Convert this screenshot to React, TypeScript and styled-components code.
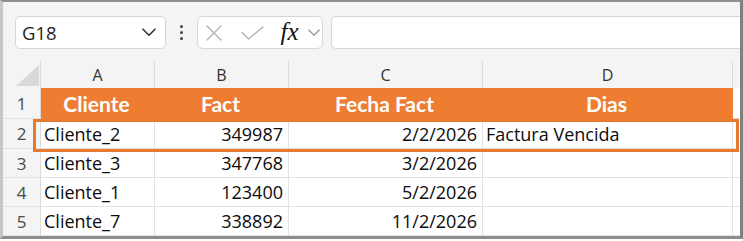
import React from 'react';
import styled, { createGlobalStyle } from 'styled-components';

const GlobalStyle = createGlobalStyle`
  html, body {
    margin: 0;
    padding: 0;
    background: #ffffff;
  }
  * {
    box-sizing: border-box;
  }
`;

const ORANGE = '#ee7d32';
const GRID = '#e2e2e2';
const PANEL = '#f4f4f4';

const Frame = styled.div`
  width: 743px;
  height: 239px;
  border-top: 2px solid #8e8e8e;
  border-left: 3px solid #c6c6c6;
  border-right: 3px solid #7f7f7f;
  border-bottom: 3px solid #8e8e8e;
  background: ${PANEL};
  overflow: hidden;
  font-family: 'Open Sans', 'Noto Sans', sans-serif;
`;

const Toolbar = styled.div`
  height: 59px;
  display: flex;
  align-items: flex-start;
  padding: 14px 0 0 12px;
`;

const NameBox = styled.div`
  width: 151px;
  height: 33px;
  display: flex;
  align-items: center;
  justify-content: space-between;
  padding: 0 9px 0 6px;
  background: #ffffff;
  border: 1px solid #d6d6d6;
  border-radius: 5px;
  font-size: 18.5px;
  color: #1f1f1f;
`;

const Dots = styled.div`
  width: 31px;
  height: 33px;
  display: flex;
  flex-direction: column;
  align-items: center;
  justify-content: center;
  gap: 3px;
`;

const Dot = styled.span`
  width: 3px;
  height: 3px;
  border-radius: 50%;
  background: #444;
`;

const FormulaButtons = styled.div`
  width: 126px;
  height: 33px;
  display: flex;
  align-items: center;
  padding-left: 8px;
  background: #ffffff;
  border: 1px solid #d6d6d6;
  border-radius: 6px;
`;

const IconSlot = styled.span<{ $w: number; $gap: number }>`
  width: ${(p) => p.$w}px;
  margin-right: ${(p) => p.$gap}px;
  display: flex;
  align-items: center;
  justify-content: center;
`;

const Fx = styled.span`
  font-family: 'Liberation Serif', 'DejaVu Serif', serif;
  font-style: italic;
  font-size: 25px;
  color: #111;
  line-height: 1;
  margin-top: -3px;
  margin-left: 2px;
`;

const FormulaInput = styled.div`
  flex: 1;
  height: 33px;
  margin-left: 8px;
  background: #ffffff;
  border: 1px solid #d6d6d6;
  border-right: none;
  border-radius: 5px 0 0 5px;
`;

const SheetArea = styled.div`
  position: relative;
`;

const Sheet = styled.div`
  display: grid;
  grid-template-columns: 38px 114px 134px 194px 250px 7px;
  grid-template-rows: 27px 31px 30px 29px 29px 29px;
`;

const Corner = styled.div`
  background: ${PANEL};
  border-right: 1px solid #dadada;
  display: flex;
  align-items: flex-end;
  justify-content: flex-end;
  padding: 0 1px 2px 0;
`;

const ColHead = styled.div`
  background: ${PANEL};
  border-right: 1px solid #dadada;
  display: flex;
  align-items: center;
  justify-content: center;
  font-size: 16px;
  color: #333;
  padding-top: 1px;
`;

const RowHead = styled.div`
  background: ${PANEL};
  border-right: 1px solid #dadada;
  border-bottom: 1px solid ${GRID};
  display: flex;
  align-items: center;
  justify-content: center;
  font-size: 17px;
  color: #4a4a4a;
`;

const Cell = styled.div<{ $align?: 'left' | 'right' | 'center'; $head?: boolean }>`
  display: flex;
  align-items: center;
  justify-content: ${(p) =>
    p.$align === 'right' ? 'flex-end' : p.$align === 'center' ? 'center' : 'flex-start'};
  padding: 0 5px 0 3px;
  white-space: nowrap;
  overflow: hidden;
  background: ${(p) => (p.$head ? ORANGE : '#ffffff')};
  border-right: 1px solid ${(p) => (p.$head ? ORANGE : GRID)};
  border-bottom: 1px solid ${(p) => (p.$head ? ORANGE : GRID)};
  font-family: ${(p) => (p.$head ? "'Lato', 'Open Sans', sans-serif" : "'Open Sans', 'Noto Sans', sans-serif")};
  font-weight: ${(p) => (p.$head ? 700 : 400)};
  font-size: ${(p) => (p.$head ? '21px' : '18px')};
  color: ${(p) => (p.$head ? '#ffffff' : '#0c0c0c')};
`;

const Spare = styled.div<{ $panel?: boolean }>`
  background: ${(p) => (p.$panel ? PANEL : '#ffffff')};
  border-bottom: 1px solid ${(p) => (p.$panel ? PANEL : GRID)};
`;

const Highlight = styled.div`
  position: absolute;
  left: 30px;
  top: 58px;
  width: 706px;
  height: 33px;
  border: 3px solid #e77a2e;
  pointer-events: none;
`;

const rows = [
  { n: 2, client: 'Cliente_2', fact: '349987', date: '2/2/2026', dias: 'Factura Vencida' },
  { n: 3, client: 'Cliente_3', fact: '347768', date: '3/2/2026', dias: '' },
  { n: 4, client: 'Cliente_1', fact: '123400', date: '5/2/2026', dias: '' },
  { n: 5, client: 'Cliente_7', fact: '338892', date: '11/2/2026', dias: '' },
];

const Chevron = ({ w, color }: { w: number; color: string }) => (
  <svg width={w} height={w * 0.6} viewBox="0 0 14 8" fill="none">
    <path d="M1 1l6 6 6-6" stroke={color} strokeWidth="1.6" strokeLinecap="round" strokeLinejoin="round" />
  </svg>
);

export default function App() {
  return (
    <>
      <GlobalStyle />
      <Frame>
        <Toolbar>
          <NameBox>
            <span>G18</span>
            <Chevron w={14} color="#333" />
          </NameBox>
          <Dots>
            <Dot />
            <Dot />
            <Dot />
          </Dots>
          <FormulaButtons>
            <IconSlot $w={16} $gap={19}>
              <svg width="16" height="16" viewBox="0 0 16 16">
                <path d="M1 1l14 14M15 1L1 15" stroke="#b3b3b3" strokeWidth="1.4" strokeLinecap="round" />
              </svg>
            </IconSlot>
            <IconSlot $w={23} $gap={14}>
              <svg width="23" height="14" viewBox="0 0 23 14">
                <path d="M1 6.5l6.5 6.5L22 1" stroke="#b3b3b3" strokeWidth="1.4" fill="none" strokeLinecap="round" strokeLinejoin="round" />
              </svg>
            </IconSlot>
            <IconSlot $w={21} $gap={9}>
              <Fx>fx</Fx>
            </IconSlot>
            <IconSlot $w={12} $gap={0}>
              <Chevron w={12} color="#9a9a9a" />
            </IconSlot>
          </FormulaButtons>
          <FormulaInput />
        </Toolbar>
        <SheetArea>
          <Sheet>
            <Corner>
              <svg width="23" height="21" viewBox="0 0 23 21">
                <polygon points="23,0 23,21 0,21" fill="#d9d9d9" />
              </svg>
            </Corner>
            <ColHead>A</ColHead>
            <ColHead>B</ColHead>
            <ColHead>C</ColHead>
            <ColHead>D</ColHead>
            <Spare $panel />

            <RowHead>1</RowHead>
            <Cell $head $align="center">Cliente</Cell>
            <Cell $head $align="center">Fact</Cell>
            <Cell $head $align="center">Fecha Fact</Cell>
            <Cell $head $align="center">Dias</Cell>
            <Spare />

            {rows.map((r) => (
              <React.Fragment key={r.n}>
                <RowHead>{r.n}</RowHead>
                <Cell>{r.client}</Cell>
                <Cell $align="right">{r.fact}</Cell>
                <Cell $align="right">{r.date}</Cell>
                <Cell>{r.dias}</Cell>
                <Spare />
              </React.Fragment>
            ))}
          </Sheet>
          <Highlight />
        </SheetArea>
      </Frame>
    </>
  );
}
